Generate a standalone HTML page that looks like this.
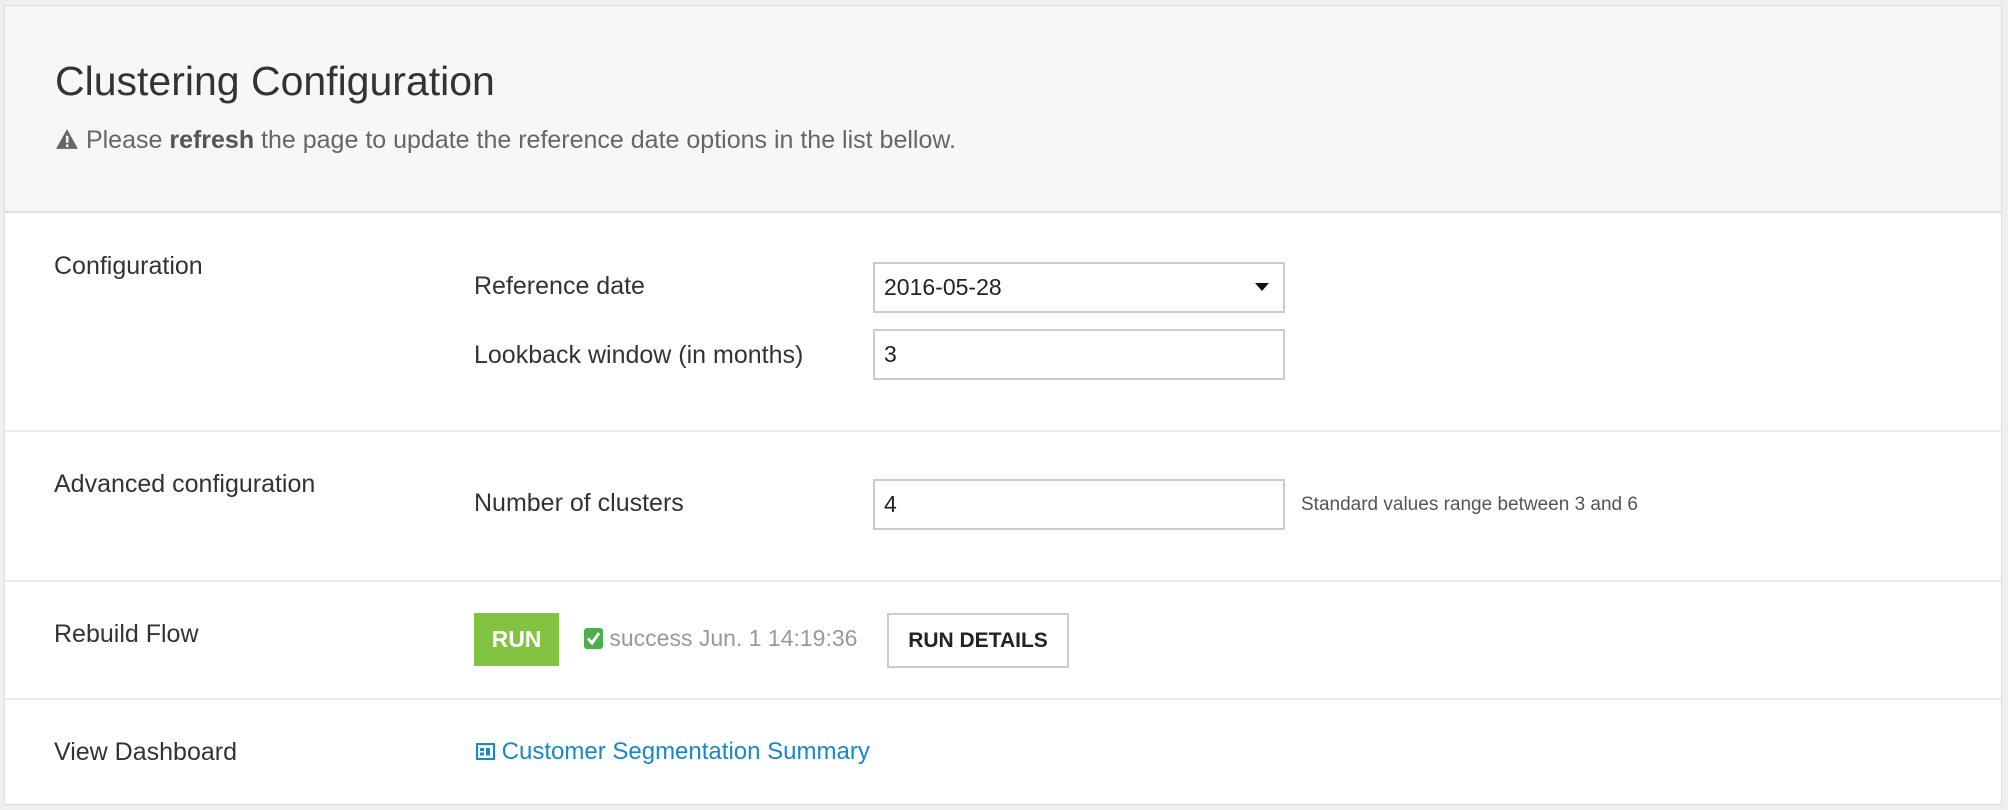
<!DOCTYPE html>
<html><head><meta charset="utf-8"><style>
html,body{margin:0;padding:0;width:2008px;height:810px;background:#efefef;overflow:hidden;font-family:"Liberation Sans",sans-serif;color:#333}
.panel{position:absolute;left:4px;top:5px;width:1996px;height:798px;border:1px solid #ddd;background:#fff}
.head{position:absolute;left:0;top:0;width:1996px;height:205px;background:#f7f7f7;border-bottom:2px solid #e0e0e0}
.abs{position:absolute;white-space:nowrap;line-height:30px}
.lbl{font-size:25px;color:#333}
.box{position:absolute;border:2px solid #ccc;background:#fff;box-sizing:border-box;font-size:23px;color:#222;padding-left:9px;line-height:46px}
.sep{position:absolute;left:0;width:1996px;height:2px;background:#ececec}
</style></head><body>
<div class="panel">
<div class="head">
<div class="abs" style="left:50px;top:52px;font-size:41px;line-height:normal;color:#333">Clustering Configuration</div>
<div class="abs" style="left:50px;top:119px;font-size:25px;color:#666">
<svg width="24" height="22" viewBox="0 0 22 20" style="vertical-align:-2px"><path d="M11 1 L21 19 L1 19 Z" fill="#666"/><rect x="10" y="7" width="2.4" height="6.5" fill="#f7f7f7"/><rect x="10" y="15" width="2.4" height="2.4" fill="#f7f7f7"/></svg> Please <b style="color:#555">refresh</b> the page to update the reference date options in the list bellow.</div>
</div>
<div class="abs lbl" style="left:49px;top:245px">Configuration</div>
<div class="abs lbl" style="left:469px;top:265px">Reference date</div>
<div class="box" style="left:868px;top:256px;width:412px;height:51px">2016-05-28<span style="position:absolute;right:14px;top:19px;width:0;height:0;border-left:7px solid transparent;border-right:7px solid transparent;border-top:8px solid #111"></span></div>
<div class="abs lbl" style="left:469px;top:334px">Lookback window (in months)</div>
<div class="box" style="left:868px;top:323px;width:412px;height:51px">3</div>
<div class="sep" style="top:424px"></div>
<div class="abs lbl" style="left:49px;top:463px">Advanced configuration</div>
<div class="abs lbl" style="left:469px;top:482px">Number of clusters</div>
<div class="box" style="left:868px;top:473px;width:412px;height:51px">4</div>
<div class="abs" style="left:1296px;top:484px;font-size:19px;color:#555">Standard values range between 3 and 6</div>
<div class="sep" style="top:574px"></div>
<div class="abs lbl" style="left:49px;top:613px">Rebuild Flow</div>
<div class="abs" style="left:469px;top:607px;width:85px;height:53px;background:#82c341;color:#fff;font-weight:bold;font-size:23px;line-height:53px;text-align:center">RUN</div>
<div class="abs" style="left:579px;top:617px;font-size:23px;color:#999"><span style="display:inline-block;width:19px;height:21px;background:#4cae4c;border-radius:3px;vertical-align:-3px;position:relative"><svg width="19" height="21" viewBox="0 0 19 21" style="position:absolute;left:0;top:0"><path d="M4 10.5 L8 15 L15 5" stroke="#fff" stroke-width="3" fill="none"/></svg></span> success Jun. 1 14:19:36</div>
<div class="abs" style="left:882px;top:607px;width:178px;height:51px;border:2px solid #ccc;background:#fff;font-size:21px;font-weight:bold;color:#222;line-height:51px;text-align:center">RUN DETAILS</div>
<div class="sep" style="top:692px"></div>
<div class="abs lbl" style="left:49px;top:731px">View Dashboard</div>
<div class="abs" style="left:471px;top:731px;font-size:24px;color:#1a87c8"><svg width="19" height="17" viewBox="0 0 19 17" style="vertical-align:-1px"><rect x="1" y="1" width="17" height="15" fill="none" stroke="#1a87c8" stroke-width="2"/><rect x="4" y="5" width="4" height="3" fill="#1a87c8"/><rect x="4" y="9.5" width="4" height="3" fill="#1a87c8"/><rect x="10" y="5" width="4" height="7.5" fill="#1a87c8"/></svg> Customer Segmentation Summary</div>
</div>
</body></html>
